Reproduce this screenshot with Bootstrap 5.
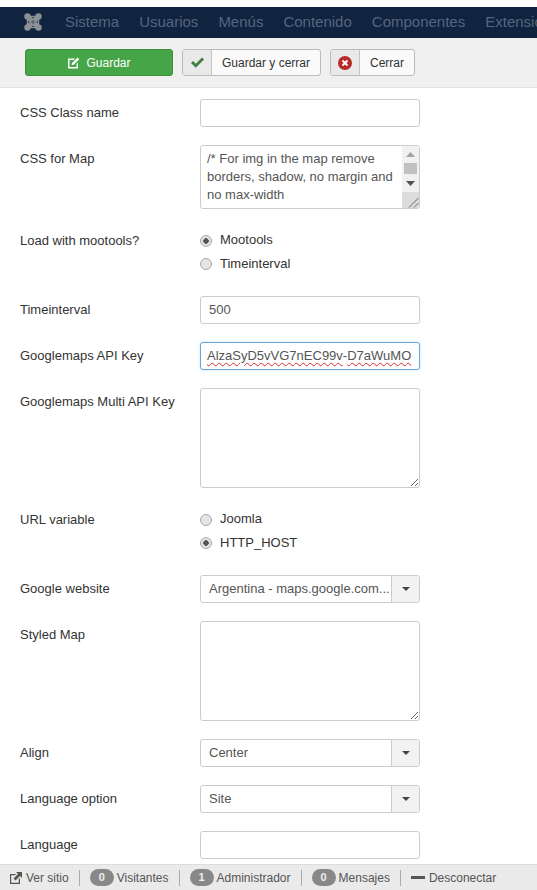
<!DOCTYPE html>
<html lang="es">
<head>
    <meta charset="UTF-8">
    <meta name="viewport" content="width=device-width, initial-scale=1.0">
    <title>Google Maps - Opciones</title>
    <link href="https://cdn.jsdelivr.net/npm/bootstrap@5.3.0/dist/css/bootstrap.min.css" rel="stylesheet">
    <style>
        html, body {
            height: 100%;
        }
        body {
            font-family: "Liberation Sans", Arial, sans-serif;
            font-size: 13px;
            color: #333;
            padding-top: 7px;
            overflow: hidden;
        }
        .top-nav {
            height: 31px;
            background-color: #10233f;
            padding-left: 24px;
            white-space: nowrap;
            overflow: hidden;
            flex-shrink: 0;
        }
        .top-nav a {
            color: #56667f;
            font-size: 15px;
            text-decoration: none;
            margin-right: 20px;
            flex-shrink: 0;
        }
        .top-nav svg {
            margin-right: 23px;
            margin-bottom: 2px;
            flex-shrink: 0;
        }
        .sub-head {
            height: 50px;
            background-color: #f0f0f0;
            border-bottom: 1px solid #e3e3e3;
            padding-left: 25px;
            gap: 9px;
            flex-shrink: 0;
        }
        .btn-save {
            width: 148px;
            height: 27px;
            background-color: #46a546;
            border: 1px solid #3d8f3d;
            border-radius: 3px;
            color: #fff;
            font-size: 12px;
            padding: 0;
            gap: 6px;
        }
        .btn-tool {
            height: 27px;
            background-color: #fafafa;
            border: 1px solid #bbb;
            border-radius: 3px;
            color: #333;
            font-size: 12px;
            padding: 0;
            overflow: hidden;
        }
        .btn-tool .tool-icon {
            width: 29px;
            height: 100%;
            background-color: #e9e9e9;
            border-right: 1px solid #c4c4c4;
        }
        .btn-tool .tool-text {
            padding: 0 10px;
        }
        .form-area {
            padding: 11px 0 0 20px;
            overflow: hidden;
            gap: 18px;
        }
        .field-row {
            flex-shrink: 0;
        }
        .field-label {
            width: 180px;
            padding-top: 5px;
            line-height: 18px;
            flex-shrink: 0;
        }
        .field-control {
            width: 220px;
            flex-shrink: 0;
        }
        .form-control.joomla-input {
            height: 28px;
            min-height: 0;
            font-size: 13px;
            font-family: inherit;
            color: #555;
            padding: 4px 8px;
            border: 1px solid #ccc;
            border-radius: 3px;
            line-height: 18px;
        }
        input.form-control.joomla-input {
            padding-top: 3px;
            padding-bottom: 5px;
        }
        textarea.form-control.joomla-input {
            height: 100px;
            resize: both;
        }
        textarea.css-box.form-control.joomla-input {
            height: 64px;
            overflow: hidden;
            resize: none;
            padding: 4px 24px 0 6px;
        }
        .fake-scroll {
            top: 1px;
            right: 1px;
            bottom: 1px;
            width: 17px;
            background-color: #f1f1f1;
        }
        .scroll-btn {
            height: 17px;
            flex-shrink: 0;
        }
        .scroll-thumb {
            height: 11px;
            margin: 0 2px 1px;
            background-color: #c1c1c1;
            flex-shrink: 0;
        }
        .scroll-corner {
            background-color: #dcdcdc;
        }
        .key-box {
            border-color: #6aa6d6 !important;
            box-shadow: 0 0 3px rgba(82, 168, 236, .35);
            white-space: nowrap;
            overflow: hidden;
            padding-left: 6px !important;
            padding-right: 0 !important;
        }
        .spell-bad {
            text-decoration: underline wavy #d9302c 1px;
            text-underline-offset: 2px;
        }
        .radio-group {
            height: 51px;
            padding-top: 1px;
        }
        .radio-item {
            height: 23.5px;
            gap: 8px;
            padding-left: 0;
        }
        .radio-item input {
            appearance: none;
            width: 12px;
            height: 12px;
            margin: 2px 0 0;
            border: 1px solid #aaa;
            border-radius: 50%;
            background-color: #e4e4e4;
            flex-shrink: 0;
        }
        .radio-item input:checked {
            background-image: radial-gradient(circle, #555 0, #555 2.5px, #e4e4e4 3px);
        }
        .pick-box {
            height: 28px;
            background-color: #fff;
            border: 1px solid #ccc;
            border-radius: 3px;
            color: #555;
            overflow: hidden;
        }
        .pick-text {
            padding: 0 0 0 8px;
            white-space: nowrap;
        }
        .pick-arrow {
            width: 28px;
            height: 100%;
            background-color: #f2f2f2;
            border-left: 1px solid #ccc;
            flex-shrink: 0;
        }
        .pick-arrow::after {
            content: "";
            border-top: 4px solid #444;
            border-left: 4px solid transparent;
            border-right: 4px solid transparent;
        }
        .status-bar {
            height: 26px;
            background-color: #eaeaea;
            border-top: 1px solid #ddd;
            padding-left: 10px;
            font-size: 12px;
            color: #555;
            flex-shrink: 0;
            white-space: nowrap;
        }
        .status-bar .sep {
            width: 1px;
            height: 16px;
            background-color: #aaa;
            margin: 0 10px;
        }
        .count-pill {
            width: 24px;
            height: 17px;
            background-color: #888;
            border-radius: 9px;
            color: #eee;
            font-size: 11px;
            font-weight: 700;
            margin-right: 3px;
        }
    </style>
</head>
<body class="d-flex flex-column">
    <nav class="top-nav d-flex align-items-center">
        <svg width="18" height="18" viewBox="0 0 18 18" fill="#8c9198">
            <circle cx="3.500" cy="3.500" r="3.200"/>
            <circle cx="14.500" cy="3.500" r="3.200"/>
            <circle cx="3.500" cy="14.500" r="3.200"/>
            <circle cx="14.500" cy="14.500" r="3.200"/>
            <path d="M3.500 3.500L14.500 14.500M14.500 3.500L3.500 14.500" stroke="#8c9198" stroke-width="5"/>
            <path d="M6 3.500h6M6 14.500h6M3.500 6v6M14.500 6v6" stroke="#8c9198" stroke-width="1.500"/>
            <path d="M9 6.800L11.200 9L9 11.200L6.800 9z" fill="#5d6675"/>
        </svg>
        <a href="#">Sistema</a>
        <a href="#">Usuarios</a>
        <a href="#">Menús</a>
        <a href="#">Contenido</a>
        <a href="#">Componentes</a>
        <a href="#">Extensiones</a>
    </nav>

    <div class="sub-head d-flex align-items-center">
        <button type="button" class="btn-save d-flex align-items-center justify-content-center">
            <svg width="13" height="13" viewBox="0 0 13 13" fill="#fff"><path d="M1 2.500h7L6.500 4H2.500v7h7V8L11 6.500V12.500H1zM5 7l5.500-5.500 1.700 1.700L6.700 8.700 4.600 9.200z"/></svg>
            Guardar
        </button>
        <button type="button" class="btn-tool d-flex align-items-center">
            <span class="tool-icon d-flex align-items-center justify-content-center">
                <svg width="13" height="11" viewBox="0 0 13 11" fill="#3f7f3f"><path d="M0 6l2-2 2.800 2.800L11 .5l2 2-8.200 8.200z"/></svg>
            </span>
            <span class="tool-text">Guardar y cerrar</span>
        </button>
        <button type="button" class="btn-tool d-flex align-items-center">
            <span class="tool-icon d-flex align-items-center justify-content-center">
                <svg width="14" height="14" viewBox="0 0 14 14"><circle cx="7" cy="7" r="7" fill="#b52b27"/><path d="M4.500 4.500l5 5M9.500 4.500l-5 5" stroke="#fff" stroke-width="2"/></svg>
            </span>
            <span class="tool-text">Cerrar</span>
        </button>
    </div>

    <form class="form-area flex-grow-1 d-flex flex-column">
        <div class="field-row d-flex">
            <label class="field-label">CSS Class name</label>
            <div class="field-control"><input type="text" class="form-control joomla-input"></div>
        </div>
        <div class="field-row d-flex">
            <label class="field-label">CSS for Map</label>
            <div class="field-control position-relative">
                <textarea class="form-control joomla-input css-box" spellcheck="false">/* For img in the map remove borders, shadow, no margin and no max-width
**
.map img { border: 0; box-shadow: none; margin: 0; max-width: none; }</textarea>
                <div class="fake-scroll position-absolute d-flex flex-column">
                    <div class="scroll-btn d-flex align-items-center justify-content-center">
                        <svg width="9" height="5" viewBox="0 0 9 5" fill="#a3a3a3"><path d="M0 5L4.500 0L9 5z"/></svg>
                    </div>
                    <div class="scroll-thumb"></div>
                    <div class="scroll-btn d-flex align-items-center justify-content-center">
                        <svg width="9" height="5" viewBox="0 0 9 5" fill="#505050"><path d="M0 0L4.500 5L9 0z"/></svg>
                    </div>
                    <div class="scroll-corner flex-grow-1 d-flex align-items-end justify-content-end">
                        <svg width="12" height="12" viewBox="0 0 12 12" stroke="#666" fill="none"><path d="M2 11.500L11.500 2M7 11.500L11.500 7"/></svg>
                    </div>
                </div>
            </div>
        </div>
        <div class="field-row d-flex">
            <label class="field-label">Load with mootools?</label>
            <div class="field-control radio-group">
                <label class="radio-item d-flex align-items-center"><input type="radio" name="moo" checked>Mootools</label>
                <label class="radio-item d-flex align-items-center"><input type="radio" name="moo">Timeinterval</label>
            </div>
        </div>
        <div class="field-row d-flex">
            <label class="field-label">Timeinterval</label>
            <div class="field-control"><input type="text" class="form-control joomla-input" value="500"></div>
        </div>
        <div class="field-row d-flex">
            <label class="field-label">Googlemaps API Key</label>
            <div class="field-control">
                <div class="form-control joomla-input key-box"><span class="spell-bad">AlzaSyD5vVG7nEC99v</span>-<span class="spell-bad">D7aWuMO</span></div>
            </div>
        </div>
        <div class="field-row d-flex">
            <label class="field-label">Googlemaps Multi API Key</label>
            <div class="field-control"><textarea class="form-control joomla-input"></textarea></div>
        </div>
        <div class="field-row d-flex">
            <label class="field-label">URL variable</label>
            <div class="field-control radio-group">
                <label class="radio-item d-flex align-items-center"><input type="radio" name="urlvar">Joomla</label>
                <label class="radio-item d-flex align-items-center"><input type="radio" name="urlvar" checked>HTTP_HOST</label>
            </div>
        </div>
        <div class="field-row d-flex">
            <label class="field-label">Google website</label>
            <div class="field-control">
                <div class="pick-box d-flex align-items-center">
                    <span class="pick-text flex-grow-1">Argentina - maps.google.com...</span>
                    <span class="pick-arrow d-flex align-items-center justify-content-center"></span>
                </div>
            </div>
        </div>
        <div class="field-row d-flex">
            <label class="field-label">Styled Map</label>
            <div class="field-control"><textarea class="form-control joomla-input"></textarea></div>
        </div>
        <div class="field-row d-flex">
            <label class="field-label">Align</label>
            <div class="field-control">
                <div class="pick-box d-flex align-items-center">
                    <span class="pick-text flex-grow-1">Center</span>
                    <span class="pick-arrow d-flex align-items-center justify-content-center"></span>
                </div>
            </div>
        </div>
        <div class="field-row d-flex">
            <label class="field-label">Language option</label>
            <div class="field-control">
                <div class="pick-box d-flex align-items-center">
                    <span class="pick-text flex-grow-1">Site</span>
                    <span class="pick-arrow d-flex align-items-center justify-content-center"></span>
                </div>
            </div>
        </div>
        <div class="field-row d-flex">
            <label class="field-label">Language</label>
            <div class="field-control"><input type="text" class="form-control joomla-input"></div>
        </div>
    </form>

    <footer class="status-bar d-flex align-items-center">
        <svg class="me-1" width="12" height="12" viewBox="0 0 12 12" fill="#555"><path d="M0 2h6L5 3.200H1.200v7.600h7.600V7L10 6v6H0zM6 0h6v6L10 4 5.500 8.500 3.500 6.500 8 2z"/></svg>
        Ver sitio
        <span class="sep"></span>
        <span class="count-pill d-flex align-items-center justify-content-center">0</span>Visitantes
        <span class="sep"></span>
        <span class="count-pill d-flex align-items-center justify-content-center">1</span>Administrador
        <span class="sep"></span>
        <span class="count-pill d-flex align-items-center justify-content-center">0</span>Mensajes
        <span class="sep"></span>
        <svg class="me-1" width="14" height="3" viewBox="0 0 14 3" fill="#555"><rect width="14" height="3"/></svg>
        Desconectar
    </footer>

    <script src="https://cdn.jsdelivr.net/npm/bootstrap@5.3.0/dist/js/bootstrap.bundle.min.js"></script>
</body>
</html>
